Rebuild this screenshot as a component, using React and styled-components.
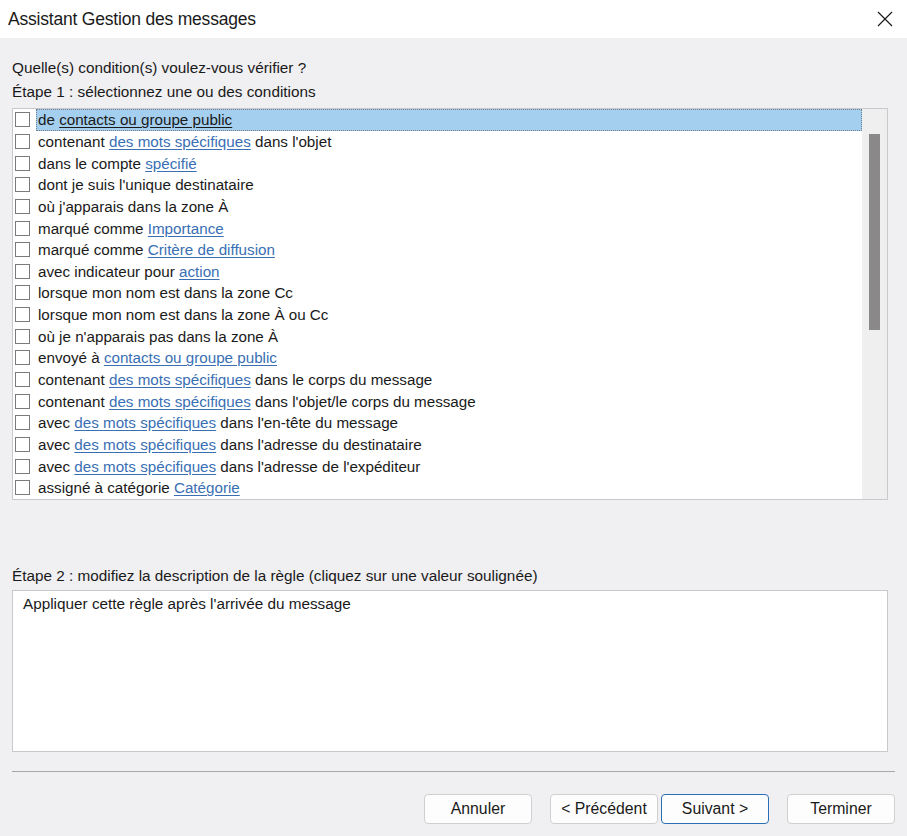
import React from "react";
import styled, { createGlobalStyle } from "styled-components";

const Global = createGlobalStyle`
  html, body {
    margin: 0;
    padding: 0;
    background: #f0eff1;
  }
  body {
    font-family: "Liberation Sans", Arial, sans-serif;
    color: #1a1a1a;
  }
`;

const Window = styled.div`
  width: 907px;
  height: 836px;
  display: flex;
  flex-direction: column;
  background: #f0eff1;
  overflow: hidden;
`;

const TitleBar = styled.div`
  height: 38px;
  background: #ffffff;
  display: flex;
  align-items: center;
  justify-content: space-between;
  padding: 0 12px 0 8px;
  flex-shrink: 0;
`;

const TitleText = styled.div`
  font-size: 17.5px;
  color: #1a1a1a;
  letter-spacing: -0.2px;
`;

const CloseBtn = styled.div`
  width: 20px;
  height: 20px;
  display: flex;
  align-items: center;
  justify-content: center;
`;

const Body = styled.div`
  flex: 1;
  display: flex;
  flex-direction: column;
  padding: 18px 12px 0 12px;
`;

const Label = styled.div`
  font-size: 15.3px;
  line-height: 24px;
  color: #1a1a1a;
`;

const ListBox = styled.div`
  margin-top: 4px;
  width: 876px;
  height: 392px;
  box-sizing: border-box;
  background: #ffffff;
  border: 1px solid #c9c9c9;
  display: flex;
  overflow: hidden;
`;

const Rows = styled.div`
  flex: 1;
  display: flex;
  flex-direction: column;
`;

const Row = styled.div`
  height: 21.65px;
  display: flex;
  align-items: stretch;
  padding-left: 2px;
  box-sizing: border-box;
  font-size: 15.2px;
  white-space: nowrap;
`;

const CheckCell = styled.div`
  width: 21px;
  display: flex;
  align-items: center;
  flex-shrink: 0;
`;

const Check = styled.span`
  width: 13px;
  height: 13px;
  border: 1px solid #7a7a7a;
  background: #fff;
`;

const RowText = styled.div`
  flex: 1;
  display: flex;
  align-items: center;
  padding-left: 2px;
  background: ${(p) => (p.$selected ? "#a5cfef" : "transparent")};
  outline: ${(p) => (p.$selected ? "1px dotted #6f7f8f" : "none")};
  outline-offset: -1px;
`;

const Link = styled.span`
  color: ${(p) => (p.$dark ? "#1a1a1a" : "#3a6fb4")};
  text-decoration: underline;
  text-underline-offset: 2px;
`;

const ScrollTrack = styled.div`
  width: 25px;
  background: #efefef;
  display: flex;
  justify-content: center;
  padding-top: 25px;
`;

const ScrollThumb = styled.div`
  width: 11px;
  height: 196px;
  background: #8a8888;
`;

const Spacer = styled.div`
  height: 64px;
`;

const DescBox = styled.div`
  margin-top: 2px;
  width: 876px;
  height: 162px;
  box-sizing: border-box;
  background: #ffffff;
  border: 1px solid #c9c9c9;
  padding: 4px 10px;
  font-size: 15.3px;
`;

const Separator = styled.div`
  margin-top: 19px;
  width: 883px;
  height: 1px;
  background: #a8a8a8;
`;

const ButtonBar = styled.div`
  display: flex;
  justify-content: flex-end;
  padding: 22px 0 0 0;
  width: 883px;
`;

const Button = styled.div`
  width: 108px;
  height: 30px;
  box-sizing: border-box;
  border: 1px solid ${(p) => (p.$focus ? "#2a6fb6" : "#d0d0d0")};
  border-radius: 4px;
  background: #fdfdfd;
  display: flex;
  align-items: center;
  justify-content: center;
  font-size: 15.8px;
  color: #1a1a1a;
  margin-left: ${(p) => p.$gap}px;
`;

const rows = [
  ["de ", { t: "contacts ou groupe public", dark: true }],
  ["contenant ", { t: "des mots spécifiques" }, " dans l'objet"],
  ["dans le compte ", { t: "spécifié" }],
  ["dont je suis l'unique destinataire"],
  ["où j'apparais dans la zone À"],
  ["marqué comme ", { t: "Importance" }],
  ["marqué comme ", { t: "Critère de diffusion" }],
  ["avec indicateur pour ", { t: "action " }],
  ["lorsque mon nom est dans la zone Cc"],
  ["lorsque mon nom est dans la zone À ou Cc"],
  ["où je n'apparais pas dans la zone À"],
  ["envoyé à ", { t: "contacts ou groupe public" }],
  ["contenant ", { t: "des mots spécifiques" }, " dans le corps du message"],
  ["contenant ", { t: "des mots spécifiques" }, " dans l'objet/le corps du message"],
  ["avec ", { t: "des mots spécifiques" }, " dans l'en-tête du message"],
  ["avec ", { t: "des mots spécifiques" }, " dans l'adresse du destinataire"],
  ["avec ", { t: "des mots spécifiques" }, " dans l'adresse de l'expéditeur"],
  ["assigné à catégorie ", { t: "Catégorie" }],
];

export default function App() {
  return (
    <Window>
      <Global />
      <TitleBar>
        <TitleText>Assistant Gestion des messages</TitleText>
        <CloseBtn>
          <svg width="16" height="16" viewBox="0 0 16 16">
            <path d="M1 1 L15 15 M15 1 L1 15" stroke="#1a1a1a" strokeWidth="1.2" />
          </svg>
        </CloseBtn>
      </TitleBar>
      <Body>
        <Label>Quelle(s) condition(s) voulez-vous vérifier ?</Label>
        <Label>Étape 1 : sélectionnez une ou des conditions</Label>
        <ListBox>
          <Rows>
            {rows.map((parts, i) => (
              <Row key={i}>
                <CheckCell>
                  <Check />
                </CheckCell>
                <RowText $selected={i === 0}>
                  <span>
                    {parts.map((p, j) =>
                      typeof p === "string" ? (
                        <React.Fragment key={j}>{p}</React.Fragment>
                      ) : (
                        <Link key={j} $dark={p.dark}>
                          {p.t}
                        </Link>
                      )
                    )}
                  </span>
                </RowText>
              </Row>
            ))}
          </Rows>
          <ScrollTrack>
            <ScrollThumb />
          </ScrollTrack>
        </ListBox>
        <Spacer />
        <Label>Étape 2 : modifiez la description de la règle (cliquez sur une valeur soulignée)</Label>
        <DescBox>Appliquer cette règle après l'arrivée du message</DescBox>
        <Separator />
        <ButtonBar>
          <Button $gap={0}>Annuler</Button>
          <Button $gap={18}>&lt; Précédent</Button>
          <Button $gap={3} $focus>
            Suivant &gt;
          </Button>
          <Button $gap={18}>Terminer</Button>
        </ButtonBar>
      </Body>
    </Window>
  );
}
